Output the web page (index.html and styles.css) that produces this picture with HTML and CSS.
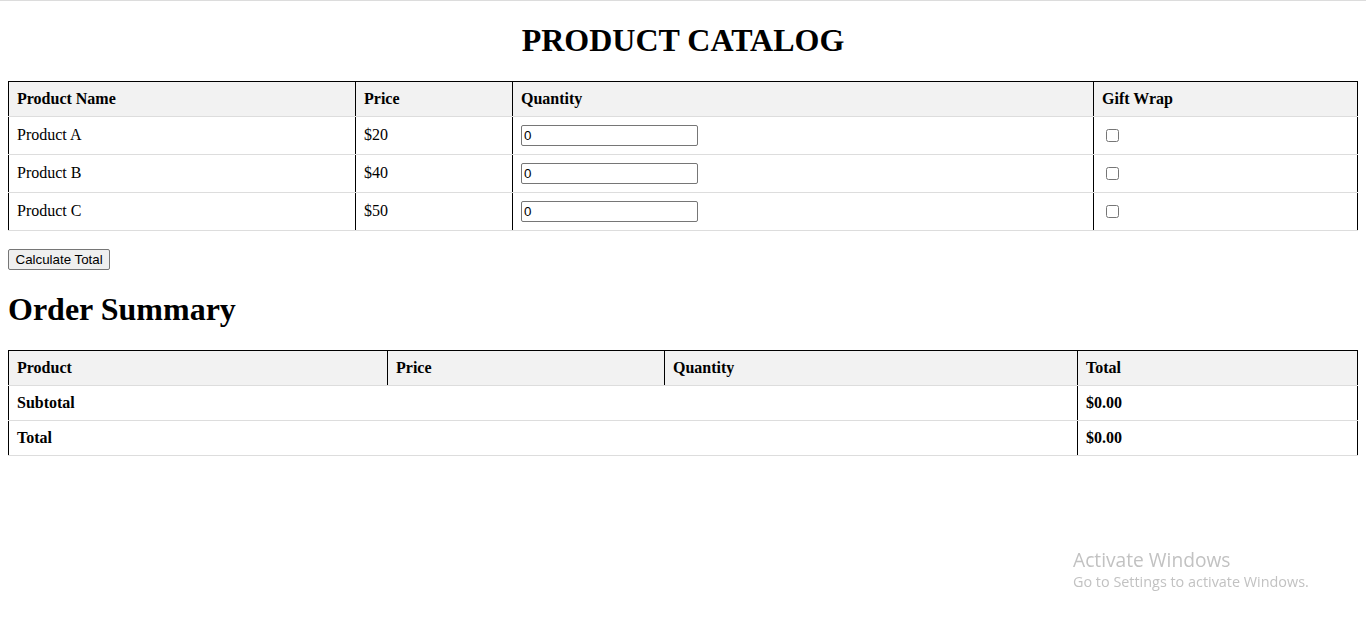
FILE: index.html
```html
<!DOCTYPE html>
<html lang="en">
<head>
<meta charset="utf-8">
<title>Product Catalog</title>
<link rel="stylesheet" href="styles.css">
</head>
<body>
<h1 class="title">PRODUCT CATALOG</h1>
<table class="grid">
  <colgroup>
    <col class="c1"><col class="c2"><col class="c3"><col class="c4">
  </colgroup>
  <thead>
    <tr><th>Product Name</th><th>Price</th><th>Quantity</th><th>Gift Wrap</th></tr>
  </thead>
  <tbody>
    <tr><td>Product A</td><td>$20</td><td><input class="qty" type="number" value="0"></td><td><input type="checkbox"></td></tr>
    <tr><td>Product B</td><td>$40</td><td><input class="qty" type="number" value="0"></td><td><input type="checkbox"></td></tr>
    <tr><td>Product C</td><td>$50</td><td><input class="qty" type="number" value="0"></td><td><input type="checkbox"></td></tr>
  </tbody>
</table>
<div class="actions"><button class="calc" type="button">Calculate Total</button></div>
<h1 class="summary-title">Order Summary</h1>
<table class="grid">
  <colgroup>
    <col class="s1"><col class="s2"><col class="s3"><col class="s4">
  </colgroup>
  <thead>
    <tr><th>Product</th><th>Price</th><th>Quantity</th><th>Total</th></tr>
  </thead>
  <tbody>
    <tr><td class="strong" colspan="3">Subtotal</td><td class="strong">$0.00</td></tr>
    <tr><td class="strong" colspan="3">Total</td><td class="strong">$0.00</td></tr>
  </tbody>
</table>
<div class="watermark">
  <div class="wm-title">Activate Windows</div>
  <div class="wm-sub">Go to Settings to activate Windows.</div>
</div>
</body>
</html>
```

FILE: styles.css
```css
html {
  border-top: 1px solid #dcdcdc;
}
body {
  margin: 0 8px 8px;
  font-family: "Liberation Serif", "Times New Roman", serif;
  font-size: 16px;
  color: #000;
  background: #fff;
}
h1 {
  font-size: 32px;
  font-weight: bold;
  margin: 21.44px 0;
}
.title {
  text-align: center;
}
.grid {
  width: 1349px;
  border-collapse: collapse;
  table-layout: fixed;
  border: 1px solid #000;
}
.grid th,
.grid td {
  border: 1px solid #000;
  border-bottom: 1px solid #ddd;
  padding: 8px;
  text-align: left;
  vertical-align: middle;
}
.grid th {
  background: #f2f2f2;
  font-weight: bold;
}
.strong {
  font-weight: bold;
}
.c1 { width: 347px; }
.c2 { width: 157px; }
.c3 { width: 581px; }
.c4 { width: 264px; }
.s1 { width: 379px; }
.s2 { width: 277px; }
.s3 { width: 413px; }
.s4 { width: 280px; }
.qty {
  font-family: "Liberation Sans", Arial, sans-serif;
  font-size: 13.333px;
  width: 177px;
  height: 21px;
  box-sizing: border-box;
  padding: 1px 2px;
  border: 1px solid #767676;
  border-radius: 2px;
  margin: 0;
  display: block;
  -moz-appearance: textfield;
}
.qty::-webkit-inner-spin-button,
.qty::-webkit-outer-spin-button {
  -webkit-appearance: none;
  margin: 0;
}
input[type="checkbox"] {
  width: 13px;
  height: 13px;
  margin: 3px 3px 3px 4px;
  display: block;
}
.actions {
  display: flex;
  margin-top: 18px;
}
.calc {
  font-family: "Liberation Sans", Arial, sans-serif;
  font-size: 13.333px;
  height: 21px;
  padding: 1px 6.5px;
  border: 1px solid #767676;
  border-radius: 2px;
  background: #efefef;
  color: #000;
}
.watermark {
  position: fixed;
  left: 1073px;
  top: 547px;
  font-family: "Open Sans", "Noto Sans", sans-serif;
  color: #c2c2c2;
}
.wm-title {
  font-size: 19.2px;
  line-height: 26px;
}
.wm-sub {
  font-size: 14.4px;
  line-height: 18px;
}
```
